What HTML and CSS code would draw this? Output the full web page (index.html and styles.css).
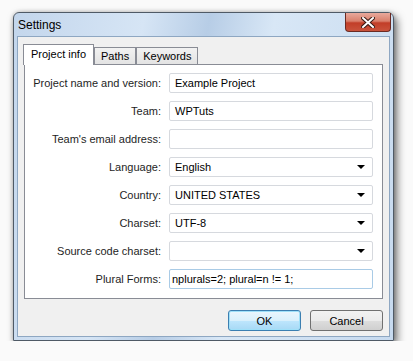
FILE: index.html
```html
<!DOCTYPE html>
<html>
<head>
  <title>Settings</title>
  <link rel="stylesheet" href="styles.css">
</head>
<body>
<div class="window">
  <div class="titlebar">
    <span class="title">Settings</span>
    <button class="close" title="Close">
      <svg width="14" height="11" viewBox="0 0 14 11">
        <path d="M2 1 L12 10 M12 1 L2 10" stroke="#3a1a14" stroke-width="4" stroke-linecap="square"/>
        <path d="M2 1 L12 10 M12 1 L2 10" stroke="#fff" stroke-width="2" stroke-linecap="square"/>
      </svg>
    </button>
  </div>
  <div class="client">
    <div class="tabs">
      <div class="tab active">Project info</div>
      <div class="tab">Paths</div>
      <div class="tab">Keywords</div>
    </div>
    <div class="panel">
      <div class="row">
        <label>Project name and version:</label>
        <div class="field">Example Project</div>
      </div>
      <div class="row">
        <label>Team:</label>
        <div class="field">WPTuts</div>
      </div>
      <div class="row">
        <label>Team's email address:</label>
        <div class="field"></div>
      </div>
      <div class="row">
        <label>Language:</label>
        <div class="field select">English<span class="arrow"></span></div>
      </div>
      <div class="row">
        <label>Country:</label>
        <div class="field select">UNITED STATES<span class="arrow"></span></div>
      </div>
      <div class="row">
        <label>Charset:</label>
        <div class="field select">UTF-8<span class="arrow"></span></div>
      </div>
      <div class="row">
        <label>Source code charset:</label>
        <div class="field select"><span class="arrow"></span></div>
      </div>
      <div class="row">
        <label>Plural Forms:</label>
        <div class="field focus">nplurals=2; plural=n != 1;</div>
      </div>
    </div>
    <div class="buttons">
      <button class="btn default">OK</button>
      <button class="btn">Cancel</button>
    </div>
  </div>
</div>
</body>
</html>
```

FILE: styles.css
```css
body {
  margin: 0;
  background: #fafafa;
  font-family: "Liberation Sans", Arial, sans-serif;
  font-size: 11px;
  color: #000;
}

.window {
  margin: 12px 0 0 13px;
  width: 381px;
  height: 329px;
  box-sizing: border-box;
  border: 1px solid #4f5a66;
  border-radius: 6px 6px 0 0;
  background: linear-gradient(100deg, #c3d6ec 0%, #d6e5f5 30%, #b7cde6 45%, #d8e7f6 60%, #c7daef 100%);
  box-shadow: 3px 4px 9px rgba(0, 0, 0, 0.55), 0 0 4px rgba(0, 0, 0, 0.2);
  padding: 0 3px 3px 3px;
  display: flex;
  flex-direction: column;
}

.titlebar {
  height: 23px;
  display: flex;
  align-items: flex-start;
  justify-content: space-between;
}

.title {
  margin: 5px 0 0 1px;
  font-size: 12px;
}

.close {
  width: 46px;
  height: 19px;
  margin: 0 -1px 0 0;
  padding: 0;
  border: 1px solid #6b2a22;
  border-top: none;
  border-radius: 0 0 4px 4px;
  background: linear-gradient(#e9a99c 0%, #d9806c 45%, #c23e28 55%, #c9533c 100%);
  display: flex;
  align-items: center;
  justify-content: center;
}

.client {
  flex: 1;
  background: #f0f0f0;
  border: 1px solid #8ea7c2;
  padding: 7px 6px 0 5px;
}

.tabs {
  display: flex;
  align-items: flex-end;
  height: 20px;
  margin-left: 1px;
  gap: 1px;
}

.tab {
  height: 16px;
  padding: 0 6px;
  line-height: 17px;
  border: 1px solid #898c95;
  border-bottom: none;
  background: linear-gradient(#f2f2f2, #e3e3e3);
  margin-left: -1px;
}

.tab.active {
  height: 20px;
  line-height: 19px;
  padding: 0 7px;
  background: #fff;
  position: relative;
  z-index: 1;
  margin-bottom: -1px;
}

.panel {
  background: #fff;
  border: 1px solid #898c95;
  margin-left: 1px;
  padding: 8px 9px 9px 0;
  display: flex;
  flex-direction: column;
  gap: 8px;
}

.row {
  display: flex;
  align-items: center;
  gap: 8px;
}

.row label {
  width: 136px;
  flex-shrink: 0;
  white-space: nowrap;
  text-align: right;
  color: #1e1e1e;
}

.field {
  flex: 1;
  height: 20px;
  box-sizing: border-box;
  border: 1px solid #d6d9de;
  border-radius: 2px;
  padding: 0 5px;
  line-height: 18px;
  display: flex;
  align-items: center;
  white-space: nowrap;
}

.field.focus {
  border-color: #a9cbe6;
  padding-left: 2px;
}

.arrow {
  width: 0;
  height: 0;
  margin-left: auto;
  margin-right: 2px;
  border-left: 4px solid transparent;
  border-right: 4px solid transparent;
  border-top: 4px solid #000;
}

.buttons {
  display: flex;
  justify-content: flex-end;
  gap: 9px;
  margin-top: 11px;
}

.btn {
  width: 73px;
  height: 21px;
  font-family: inherit;
  font-size: 11px;
  color: #000;
  border: 1px solid #707070;
  border-radius: 3px;
  background: linear-gradient(#f2f2f2 0%, #ebebeb 50%, #dddddd 51%, #cfcfcf 100%);
  padding: 0;
}

.btn.default {
  border-color: #3c7fb1;
  background: linear-gradient(#eaf6fd 0%, #d9f0fc 50%, #bee6fd 51%, #a7d9f5 100%);
  box-shadow: inset 0 0 0 1px #9fe0f9;
}
```
